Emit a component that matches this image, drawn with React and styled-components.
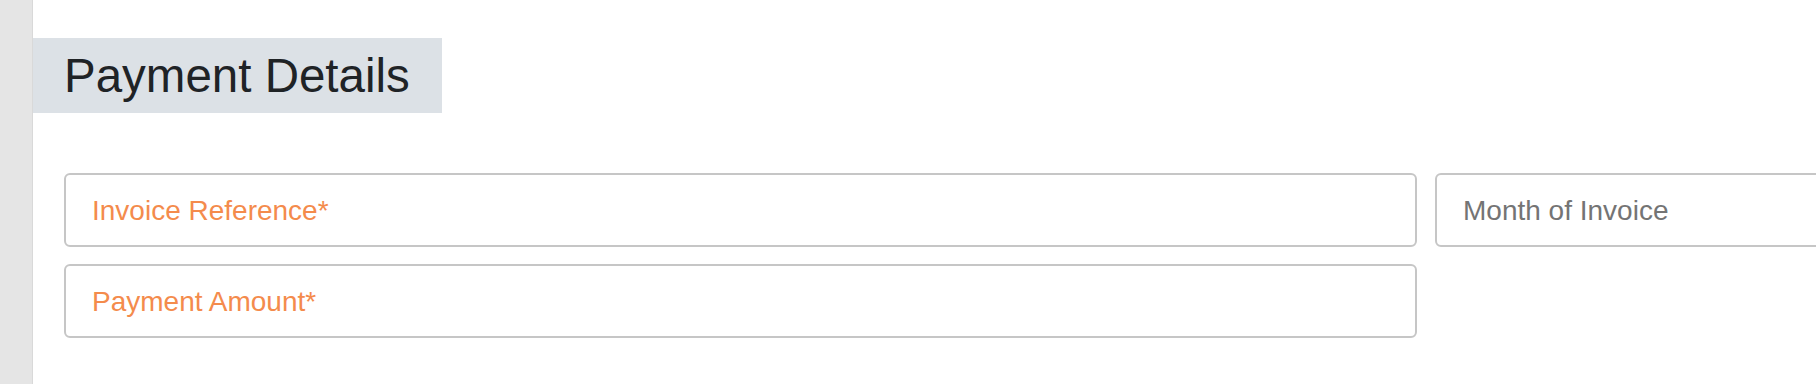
import React from 'react'
import styled, { createGlobalStyle } from 'styled-components'

const GlobalStyle = createGlobalStyle`
    html, body {
        margin: 0;
        padding: 0;
        background: #fff;
        overflow: hidden;
    }
    body {
        font-family: "Liberation Sans", Arial, Helvetica, sans-serif;
        color: #1f2326;
    }
`

const Page = styled.div`
    display: flex;
    width: 1816px;
    height: 384px;
    overflow: hidden;
`

const Side = styled.div`
    flex: 0 0 32px;
    background-color: #e5e5e5;
    border-right: 1px solid #d9d9d9;
`

const Main = styled.div`
    flex: 1;
    display: flex;
    flex-direction: column;
    align-items: flex-start;
    padding-top: 38px;
    min-width: 0;
`

const Heading = styled.h2`
    margin: 0;
    height: 75px;
    display: flex;
    align-items: center;
    padding: 0 32px 0 31px;
    background-color: #dce1e6;
    font-size: 47.5px;
    font-weight: 400;
    color: #1f2326;
    white-space: nowrap;
`

const Form = styled.div`
    display: grid;
    grid-template-columns: 1353px 600px;
    grid-auto-rows: 74px;
    column-gap: 18px;
    row-gap: 17px;
    margin-top: 60px;
    margin-left: 31px;
`

const Field = styled.input`
    box-sizing: border-box;
    width: 100%;
    height: 100%;
    margin: 0;
    padding: 2px 25px 0 26px;
    border: 2px solid #c6c6c6;
    border-radius: 6px;
    background: #fff;
    font-family: "Liberation Sans", Arial, Helvetica, sans-serif;
    font-size: 28px;
    color: #333;
    outline: none;
    &::placeholder {
        color: ${({ $required }) => ($required ? '#f48b4c' : '#747474')};
        opacity: 1;
    }
`

const App = () => {
  return (
    <>
      <GlobalStyle />
      <Page>
        <Side />
        <Main>
          <Heading>Payment Details</Heading>
          <Form>
            <Field $required placeholder="Invoice Reference*" />
            <Field placeholder="Month of Invoice" />
            <Field $required placeholder="Payment Amount*" />
          </Form>
        </Main>
      </Page>
    </>
  )
}

export default App
